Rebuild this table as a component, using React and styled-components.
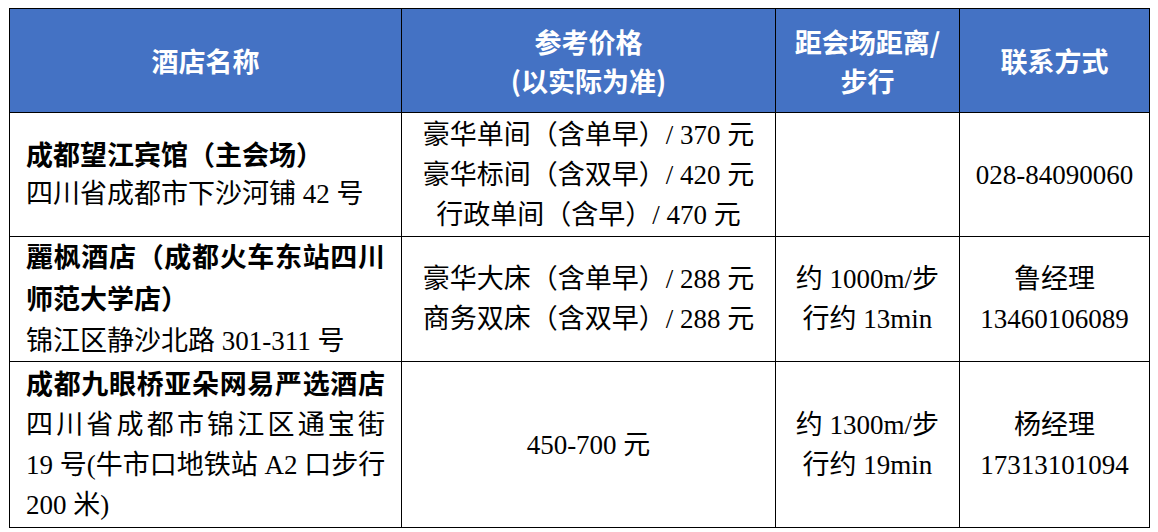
import React from 'react';
import styled, { createGlobalStyle } from 'styled-components';

const GlobalStyle = createGlobalStyle`
html, body {
    margin: 0;
    padding: 0;
    background: #ffffff;
}
`

const Page = styled.div`
padding: 8px 0 0 9px;
`

const Table = styled.table`
border-collapse: collapse;
table-layout: fixed;
width: 1140px;
font-family: "Liberation Serif", "Noto Sans CJK SC", serif;
color: #000000;
`

const HeadCell = styled.th`
background: #4472c4;
color: #ffffff;
border: 1.5px solid #000000;
font-family: "Noto Sans CJK SC", "Noto Sans", sans-serif;
font-weight: 700;
font-size: 27px;
line-height: 39px;
text-align: center;
vertical-align: middle;
padding: 0 4px;
`

const Row = styled.tr`
height: ${({ $h }) => $h}px;
`

const Cell = styled.td`
border: 1.5px solid #000000;
font-size: 27px;
line-height: 40px;
vertical-align: middle;
text-align: ${({ $left }) => ($left ? 'left' : 'center')};
padding: ${({ $left }) => ($left ? '0 16px 0 16px' : '0 4px')};
white-space: nowrap;
`

const Line = styled.div`
font-weight: ${({ $bold }) => ($bold ? 700 : 400)};
text-align: ${({ $spread }) => ($spread ? 'justify' : 'inherit')};
text-align-last: ${({ $spread }) => ($spread ? 'justify' : 'auto')};
line-height: ${({ $lh }) => ($lh ? `${$lh}px` : 'inherit')};
`

const hotels = [
    {
        h: 124,
        name: [{ t: '成都望江宾馆（主会场）', bold: true, lh: 38 }, { t: '四川省成都市下沙河铺 42 号', lh: 38 }],
        price: ['豪华单间（含单早）/ 370 元', '豪华标间（含双早）/ 420 元', '行政单间（含早）/ 470 元'],
        dist: [],
        contact: ['028-84090060'],
    },
    {
        h: 125,
        name: [
            { t: '麗枫酒店（成都火车东站四川', bold: true, spread: true, lh: 42 },
            { t: '师范大学店）', bold: true, lh: 42 },
            { t: '锦江区静沙北路 301-311 号', lh: 40 },
        ],
        price: ['豪华大床（含单早）/ 288 元', '商务双床（含双早）/ 288 元'],
        dist: ['约 1000m/步', '行约 13min'],
        contact: ['鲁经理', '13460106089'],
    },
    {
        h: 166,
        name: [
            { t: '成都九眼桥亚朵网易严选酒店', bold: true, spread: true },
            { t: '四川省成都市锦江区通宝街', spread: true },
            { t: '19 号(牛市口地铁站 A2 口步行', spread: true },
            { t: '200 米)' },
        ],
        price: ['450-700 元'],
        dist: ['约 1300m/步', '行约 19min'],
        contact: ['杨经理', '17313101094'],
    },
];

export default function App() {
    return (
        <Page>
            <GlobalStyle />
            <Table>
                <colgroup>
                    <col style={{ width: 392 }} />
                    <col style={{ width: 374 }} />
                    <col style={{ width: 184 }} />
                    <col style={{ width: 190 }} />
                </colgroup>
                <thead>
                    <Row $h={104}>
                        <HeadCell>酒店名称</HeadCell>
                        <HeadCell>参考价格<br />(以实际为准)</HeadCell>
                        <HeadCell>距会场距离/<br />步行</HeadCell>
                        <HeadCell>联系方式</HeadCell>
                    </Row>
                </thead>
                <tbody>
                    {hotels.map((hotel, i) => (
                        <Row key={i} $h={hotel.h}>
                            <Cell $left>
                                {hotel.name.map((l, j) => (
                                    <Line key={j} $bold={l.bold} $spread={l.spread} $lh={l.lh}>{l.t}</Line>
                                ))}
                            </Cell>
                            <Cell>
                                {hotel.price.map((p, j) => <Line key={j}>{p}</Line>)}
                            </Cell>
                            <Cell>
                                {hotel.dist.map((d, j) => <Line key={j}>{d}</Line>)}
                            </Cell>
                            <Cell>
                                {hotel.contact.map((c, j) => <Line key={j}>{c}</Line>)}
                            </Cell>
                        </Row>
                    ))}
                </tbody>
            </Table>
        </Page>
    )
}
